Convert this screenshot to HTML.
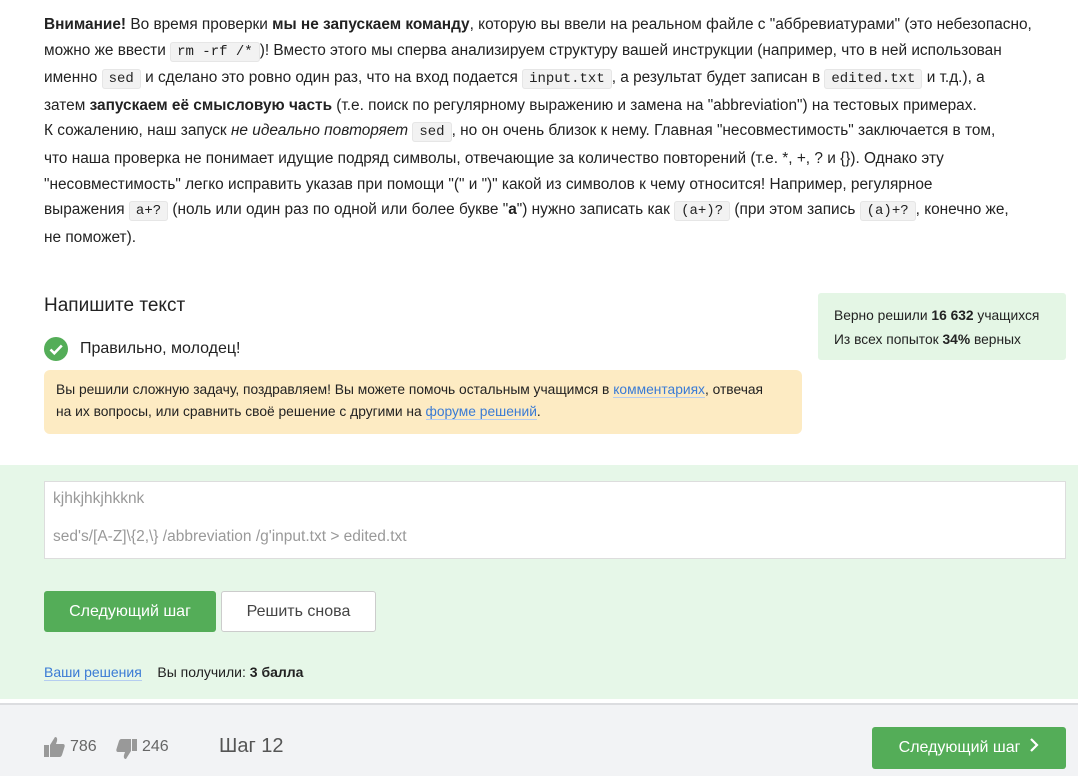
<!DOCTYPE html>
<html><head><meta charset="utf-8"><style>
body{margin:0;width:1078px;height:774px;overflow:hidden;background:#fff;font-family:"Liberation Sans",sans-serif;color:#222;position:relative}
.txt{position:absolute;left:44px;top:12px;width:1030px;font-size:15.4px;line-height:25.6px;white-space:nowrap}
code{font-family:"Liberation Mono",monospace;font-size:14px;background:#f2f2f2;border:1px solid #e6e6e6;border-radius:3px;padding:1px 6px}
.h{position:absolute;left:44px;top:295px;font-size:19px;color:#222}
.ok{position:absolute;left:44px;top:337px;font-size:16px;display:flex;align-items:center;gap:12px}
.note{position:absolute;left:44px;top:370px;height:64px;background:#fdebc3;border-radius:6px;padding:9px 12px;box-sizing:border-box;font-size:13.8px;line-height:22px;width:758px;white-space:nowrap}
a{color:#3a7bd5;text-decoration:none;border-bottom:1px solid #b5cdf0}
.stat{position:absolute;left:818px;top:293px;width:248px;height:67px;background:#e4f6e5;border-radius:3px;box-sizing:border-box;padding:11px 16px;font-size:13.8px;line-height:24px}
.green{position:absolute;left:0;top:465px;width:1078px;height:234px;background:#e6f7e8}
.inp{position:absolute;left:44px;top:481px;width:1022px;height:78px;background:#fff;border:1px solid #ddd;box-sizing:border-box;padding:8px 8px;font-size:15.5px;color:#999;line-height:38px}
.inp div:first-child{line-height:18px;margin-bottom:10px}
.b1{position:absolute;left:44px;top:591px;width:172px;height:41px;background:#54ad58;color:#fff;border-radius:3px;font-size:16px;text-align:center;line-height:41px}
.b2{position:absolute;left:221px;top:591px;width:155px;height:41px;background:#fff;border:1px solid #ccc;color:#444;border-radius:3px;font-size:16px;text-align:center;line-height:40px;box-sizing:border-box}
.res{position:absolute;left:44px;top:664px;font-size:14px}
.foot{position:absolute;left:0;top:703px;width:1078px;height:71px;background:#f2f3f5;border-top:2px solid #dcdde0}
.f{position:absolute;top:33px;font-size:16px;color:#666}
.nx{position:absolute;left:872px;top:22px;width:194px;height:42px;background:#54ad58;color:#fff;border-radius:3px;font-size:16px;line-height:42px;text-align:center}
</style></head><body>
<div class="txt"><b>Внимание!</b> Во время проверки <b>мы не запускаем команду</b>, которую вы ввели на реальном файле с "аббревиатурами" (это небезопасно,<br>можно же ввести <code>rm -rf /*</code>)! Вместо этого мы сперва анализируем структуру вашей инструкции (например, что в ней использован<br>именно <code>sed</code> и сделано это ровно один раз, что на вход подается <code>input.txt</code>, а результат будет записан в <code>edited.txt</code> и т.д.), а<br>затем <b>запускаем её смысловую часть</b> (т.е. поиск по регулярному выражению и замена на "abbreviation") на тестовых примерах.<br>К сожалению, наш запуск <i>не идеально повторяет</i> <code>sed</code>, но он очень близок к нему. Главная "несовместимость" заключается в том,<br>что наша проверка не понимает идущие подряд символы, отвечающие за количество повторений (т.е. *, +, ? и {}). Однако эту<br>"несовместимость" легко исправить указав при помощи "(" и ")" какой из символов к чему относится! Например, регулярное<br>выражения <code>a+?</code> (ноль или один раз по одной или более букве "<b>a</b>") нужно записать как <code>(a+)?</code> (при этом запись <code>(a)+?</code>, конечно же,<br>не поможет).</div>
<div class="h">Напишите текст</div>
<div class="ok"><svg width="24" height="24" viewBox="0 0 24 24"><circle cx="12" cy="12" r="12" fill="#54ad58"/><path d="M6.5 12.5l3.8 3.8 7.5-7.8" stroke="#fff" stroke-width="2.6" fill="none"/></svg>Правильно, молодец!</div>
<div class="note">Вы решили сложную задачу, поздравляем! Вы можете помочь остальным учащимся в <a>комментариях</a>, отвечая<br>на их вопросы, или сравнить своё решение с другими на <a>форуме решений</a>.</div>
<div class="stat">Верно решили <b>16 632</b> учащихся<br>Из всех попыток <b>34%</b> верных</div>
<div class="green"></div>
<div class="inp"><div>kjhkjhkjhkknk</div><div>sed's/[A-Z]\{2,\} /abbreviation /g'input.txt &gt; edited.txt</div></div>
<div class="b1">Следующий шаг</div>
<div class="b2">Решить снова</div>
<div class="res"><a>Ваши решения</a> &nbsp;&nbsp; Вы получили: <b>3 балла</b></div>
<div class="foot">
<svg style="position:absolute;left:44px;top:32px" width="21" height="20" viewBox="0 0 21 20"><rect x="0" y="8" width="5" height="12" fill="#999"/><path d="M6 8l5-8c2 0 2.5 1.5 2 4l-1 3h7c1.5 0 2 1.5 1.5 3l-2.5 8c-.5 1-1 2-2.5 2H6z" fill="#999"/></svg>
<div class="f" style="left:70px">786</div>
<svg style="position:absolute;left:116px;top:34px" width="21" height="20" viewBox="0 0 21 20"><rect x="16" y="0" width="5" height="12" fill="#999"/><path d="M15 12l-5 8c-2 0-2.5-1.5-2-4l1-3H2c-1.5 0-2-1.5-1.5-3L3 2c.5-1 1-2 2.5-2H15z" fill="#999"/></svg>
<div class="f" style="left:142px">246</div>
<div class="f" style="left:219px;top:30px;font-size:20px;color:#555">Шаг 12</div>
<div class="nx">Следующий шаг &nbsp;<svg width="10" height="14" viewBox="0 0 10 14"><path d="M2 1l6 6-6 6" stroke="#fff" stroke-width="2.2" fill="none"/></svg></div>
</div>
</body></html>
